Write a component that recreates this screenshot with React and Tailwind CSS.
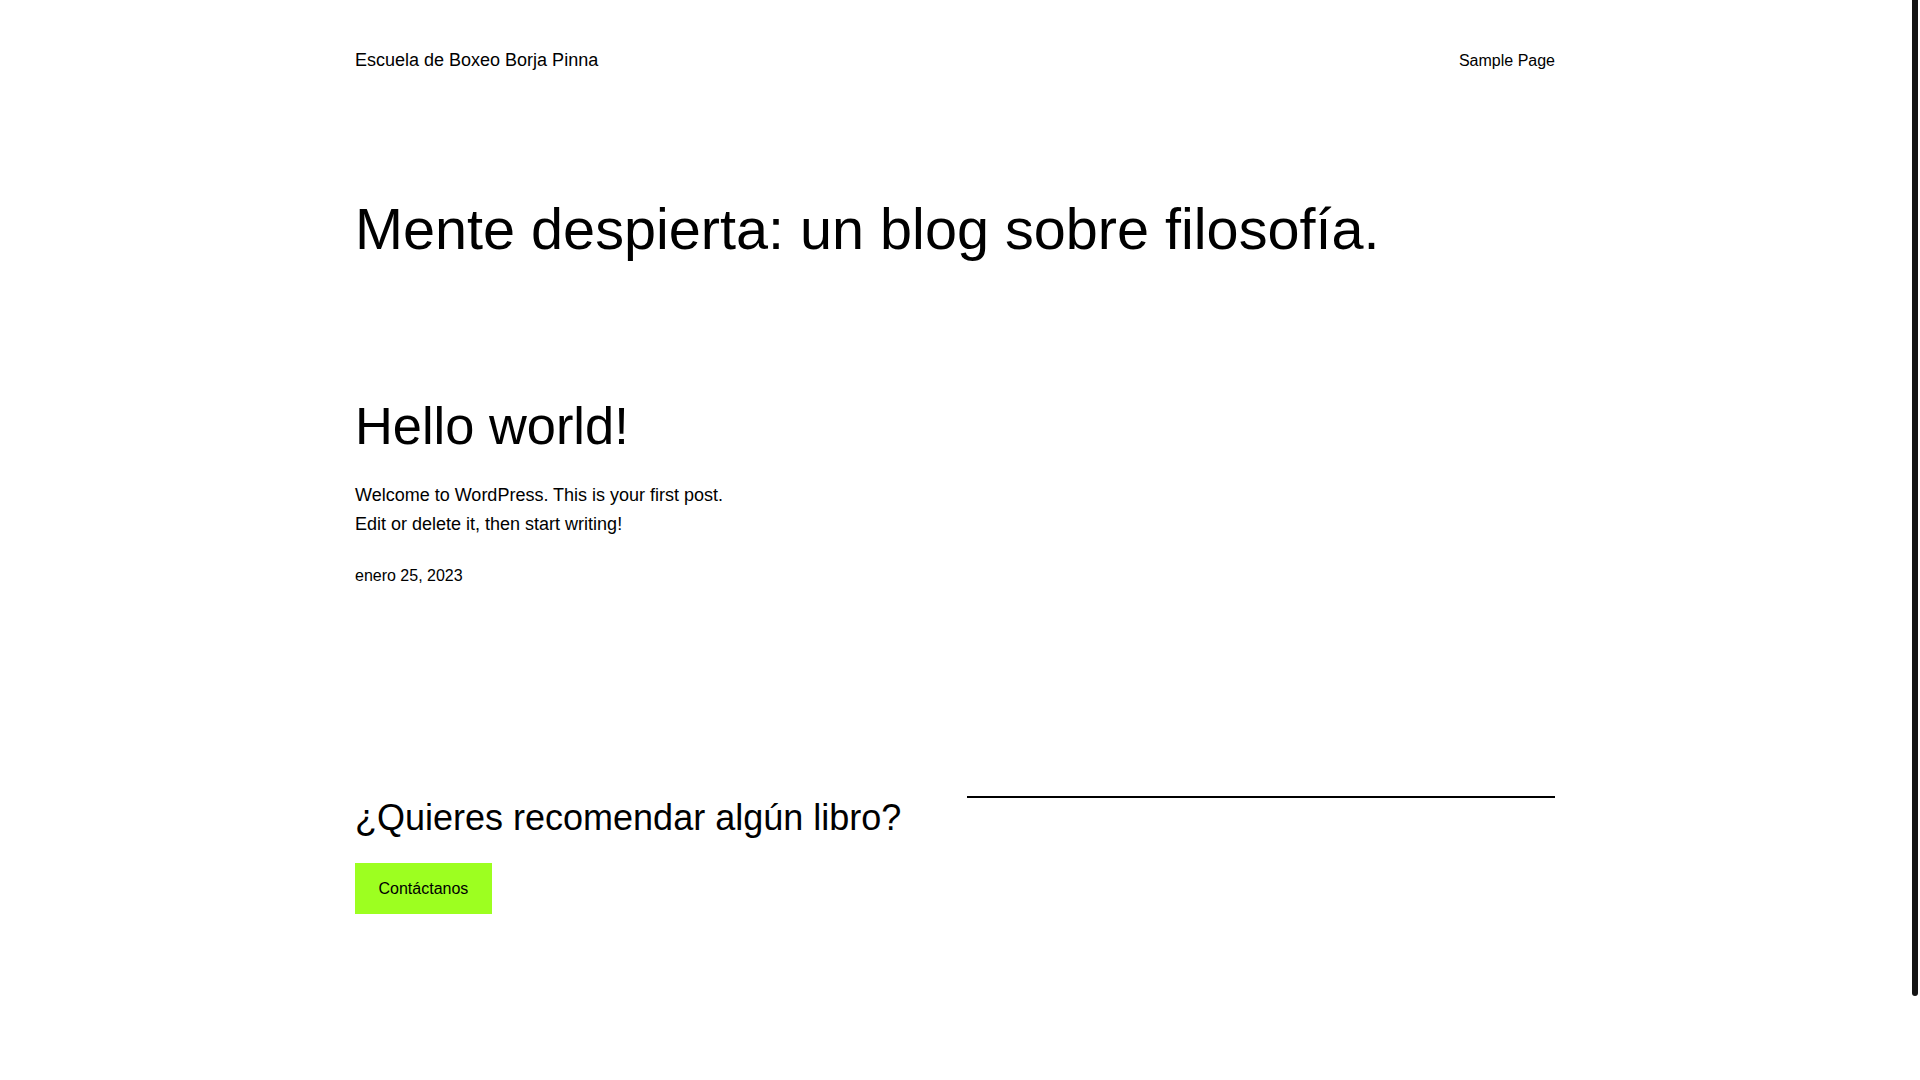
import React from "react";

const App = () => {
  return (
    <div className="h-screen flex bg-white text-black font-['Liberation_Sans',Arial,sans-serif]">
      <div className="flex-1 overflow-hidden pr-[2px]">
        <div className="mx-auto w-[1200px] pb-[256px]">
          {/* Header */}
          <header className="pt-[46px] flex items-center justify-between">
            <a href="#" className="text-[18px] leading-[1.6]">
              Escuela de Boxeo Borja Pinna
            </a>
            <nav>
              <a href="#" className="text-[16px] leading-[1.6]">
                Sample Page
              </a>
            </nav>
          </header>

          <main>
            <h1 className="mt-[120px] text-[57.6px] leading-[1.2] font-normal">
              Mente despierta: un blog sobre filosofía.
            </h1>

            {/* Post */}
            <article className="mt-[131px]">
              <h2 className="text-[52.4px] leading-[1.2] font-normal">
                <a href="#">Hello world!</a>
              </h2>
              <div className="mt-[23.5px] w-[370px] text-[18px] leading-[1.6]">
                <p>Welcome to WordPress. This is your first post. Edit or delete it, then start writing!</p>
              </div>
              <div className="mt-[24px] text-[16px] leading-[1.6]">
                <time>enero 25, 2023</time>
              </div>
            </article>

            {/* Call to action */}
            <section className="mt-[208px] grid grid-cols-2 gap-6">
              <div>
                <h2 className="text-[36px] leading-[1.2] font-normal">
                  ¿Quieres recomendar algún libro?
                </h2>
                <a
                  href="#"
                  className="mt-[23.5px] inline-flex h-[51px] items-center px-[23.5px] bg-[#9dff20] text-[16px] text-black"
                >
                  Contáctanos
                </a>
              </div>
              <div>
                <hr className="border-0 border-t-2 border-solid border-black" />
              </div>
            </section>
          </main>
        </div>
      </div>

      {/* Scrollbar */}
      <div className="w-[8px] shrink-0 bg-white">
        <div className="h-[996px] w-[6px] rounded-b-full rounded-t-[3px] bg-[#141414]" />
      </div>
    </div>
  );
};

export default App;
